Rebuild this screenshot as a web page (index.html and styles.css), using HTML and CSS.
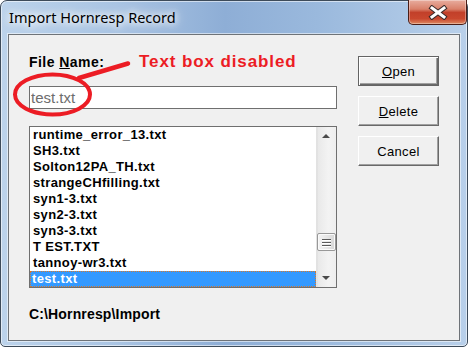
FILE: index.html
```html
<!DOCTYPE html>
<html lang="en">
<head>
  <meta charset="UTF-8">
  <title>Import Hornresp Record</title>
  <link rel="stylesheet" href="styles.css">
</head>
<body>
  <div class="window">
    <div class="titlebar">
      <span class="title">Import Hornresp Record</span>
      <button class="close-btn" aria-label="Close">
        <svg width="22" height="15" viewBox="0 0 22 15">
          <path d="M5 3 L17 12 M5 12 L17 3" stroke="#3b2b2b" stroke-width="5" stroke-linecap="square" fill="none"/>
          <path d="M5 3 L17 12 M5 12 L17 3" stroke="#ffffff" stroke-width="3" stroke-linecap="square" fill="none"/>
        </svg>
      </button>
    </div>

    <div class="client">
      <div class="main-col">
        <div class="label-row">
          <label class="field-label" for="filename">File <u>N</u>ame:</label>
          <span class="note">Text box disabled</span>
        </div>
        <input id="filename" class="name-input" type="text" value="test.txt" disabled>

        <div class="listbox">
          <ul class="file-list">
            <li>runtime_error_13.txt</li>
            <li>SH3.txt</li>
            <li>Solton12PA_TH.txt</li>
            <li>strangeCHfilling.txt</li>
            <li>syn1-3.txt</li>
            <li>syn2-3.txt</li>
            <li>syn3-3.txt</li>
            <li>T EST.TXT</li>
            <li>tannoy-wr3.txt</li>
            <li class="selected">test.txt</li>
          </ul>
          <div class="scrollbar">
            <span class="arrow arrow-up"></span>
            <span class="thumb"><i></i><i></i><i></i></span>
            <span class="arrow arrow-down"></span>
          </div>
        </div>

        <div class="path">C:\Hornresp\Import</div>
      </div>

      <div class="button-col">
        <button class="dlg-btn default"><u>O</u>pen</button>
        <button class="dlg-btn"><u>D</u>elete</button>
        <button class="dlg-btn">Cancel</button>
      </div>

      <!-- red marker drawn over the dialog -->
      <svg class="marker" width="120" height="60" viewBox="0 0 120 60">
        <ellipse cx="39.5" cy="33.5" rx="37.5" ry="20" fill="none" stroke="#ec1c24" stroke-width="4"/>
        <path d="M66 17 L115 2.5" stroke="#ec1c24" stroke-width="4.5" stroke-linecap="round"/>
      </svg>
    </div>
  </div>
</body>
</html>
```

FILE: styles.css
```css
* {
  box-sizing: border-box;
  margin: 0;
  padding: 0;
}

body {
  background: #ffffff;
  width: 468px;
  height: 349px;
  overflow: hidden;
}

.window {
  width: 468px;
  height: 347px;
  border: 1px solid #3d4b5a;
  border-radius: 7px 7px 5px 5px;
  background: linear-gradient(90deg, #bcd3eb 0%, #a9c4e3 25%, #8eaed6 48%, #9ab9dd 68%, #b9d0ea 100%);
  box-shadow: inset 0 0 0 1px rgba(255, 255, 255, 0.55);
  padding: 0 7px 5px;
  display: flex;
  flex-direction: column;
}

.titlebar {
  height: 33px;
  display: flex;
  align-items: flex-start;
  justify-content: space-between;
}

.title {
  font-family: "Noto Sans", "Open Sans", sans-serif;
  font-size: 14.5px;
  color: #000000;
  padding: 6px 0 0 1px;
  text-shadow: 0 0 6px #ffffff, 0 0 10px #ffffff, 0 0 14px rgba(255, 255, 255, 0.8);
}

.close-btn {
  width: 59px;
  height: 25px;
  margin: -1px -7px 0 0;
  border: 1px solid #4a1d16;
  border-top: none;
  border-radius: 0 0 5px 5px;
  background: linear-gradient(180deg, #e8ad9f 0%, #d9806a 38%, #c2402a 52%, #c9472e 78%, #de8a62 100%);
  box-shadow: inset 0 0 0 1px rgba(255, 255, 255, 0.35);
  display: flex;
  align-items: center;
  justify-content: center;
}

.client {
  height: 307px;
  background: #f0f0f0;
  border: 1px solid #6e7378;
  box-shadow: 0 0 0 1px rgba(255, 255, 255, 0.55);
  padding: 19px 20px 0 20px;
  display: flex;
  gap: 21px;
  position: relative;
}

.main-col {
  width: 308px;
  display: flex;
  flex-direction: column;
}

.label-row {
  display: flex;
  align-items: baseline;
  height: 16px;
  line-height: 16px;
}

.field-label {
  width: 110px;
  font-family: "Liberation Sans", Arial, sans-serif;
  font-weight: bold;
  font-size: 14px;
  letter-spacing: 0.45px;
  color: #000000;
}

.note {
  font-family: "Liberation Sans", Arial, sans-serif;
  font-weight: bold;
  font-size: 17px;
  letter-spacing: 0.9px;
  color: #ec1c24;
}

.name-input {
  margin-top: 16px;
  width: 308px;
  height: 23px;
  border: 1px solid #6f6f6f;
  background: #ffffff;
  padding: 0 0 0 1px;
  font-family: "Liberation Sans", Arial, sans-serif;
  font-size: 15px;
  color: #6d6d6d;
  outline: none;
}

.listbox {
  margin-top: 17px;
  height: 162px;
  border: 1px solid #6f6f6f;
  background: #ffffff;
  display: flex;
}

.file-list {
  list-style: none;
  flex: 1;
  font-family: "Liberation Sans", Arial, sans-serif;
  font-weight: bold;
  font-size: 13px;
  letter-spacing: 0.35px;
  color: #000000;
}

.file-list li {
  height: 16px;
  line-height: 16px;
  padding-left: 3px;
}

.file-list li.selected {
  background: #3399ff;
  color: #ffffff;
  outline: 1px dotted #d9792a;
  outline-offset: -1px;
  padding-left: 2px;
}

.scrollbar {
  width: 20px;
  position: relative;
  background: linear-gradient(90deg, #dcdcdc 0, #e9e9e9 1px, #f3f3f3 60%, #eeeeee 100%);
  border-left: 1px solid #e2e2e2;
}

.arrow {
  position: absolute;
  left: 5px;
  width: 0;
  height: 0;
  border-left: 4px solid transparent;
  border-right: 4px solid transparent;
}

.arrow-up {
  top: 7px;
  border-bottom: 4px solid #4a4a4a;
}

.arrow-down {
  bottom: 7px;
  border-top: 4px solid #4a4a4a;
}

.thumb {
  position: absolute;
  left: 0;
  top: 106px;
  width: 19px;
  height: 18px;
  border: 1px solid #989898;
  border-radius: 2px;
  background: linear-gradient(90deg, #f4f4f4, #e3e3e3 60%, #d8d8d8);
  box-shadow: inset 0 0 0 1px #fafafa;
  display: flex;
  flex-direction: column;
  align-items: center;
  justify-content: center;
  gap: 2px;
}

.thumb i {
  display: block;
  width: 9px;
  height: 1px;
  background: #5a5a5a;
  box-shadow: 0 1px 0 #ffffff;
}

.path {
  margin-top: 18px;
  font-family: "Liberation Sans", Arial, sans-serif;
  font-weight: bold;
  font-size: 14px;
  letter-spacing: 0.15px;
  line-height: 16px;
  color: #000000;
}

.button-col {
  display: flex;
  flex-direction: column;
  gap: 10px;
  padding-top: 2px;
}

.dlg-btn {
  width: 81px;
  height: 30px;
  background: #f0f0f0;
  border: none;
  border-top: 1px solid #ffffff;
  border-left: 1px solid #ffffff;
  border-right: 1px solid #696969;
  border-bottom: 1px solid #696969;
  box-shadow: inset -1px -1px 0 #a0a0a0;
  font-family: "Liberation Sans", Arial, sans-serif;
  font-size: 13px;
  letter-spacing: 0.3px;
  color: #000000;
}

.dlg-btn.default {
  border: 1px solid #646464;
  box-shadow: inset 1px 1px 0 #ffffff, inset -1px -1px 0 #696969, inset -2px -2px 0 #a0a0a0;
}

.marker {
  position: absolute;
  left: 4px;
  top: 26px;
  overflow: visible;
}
```
